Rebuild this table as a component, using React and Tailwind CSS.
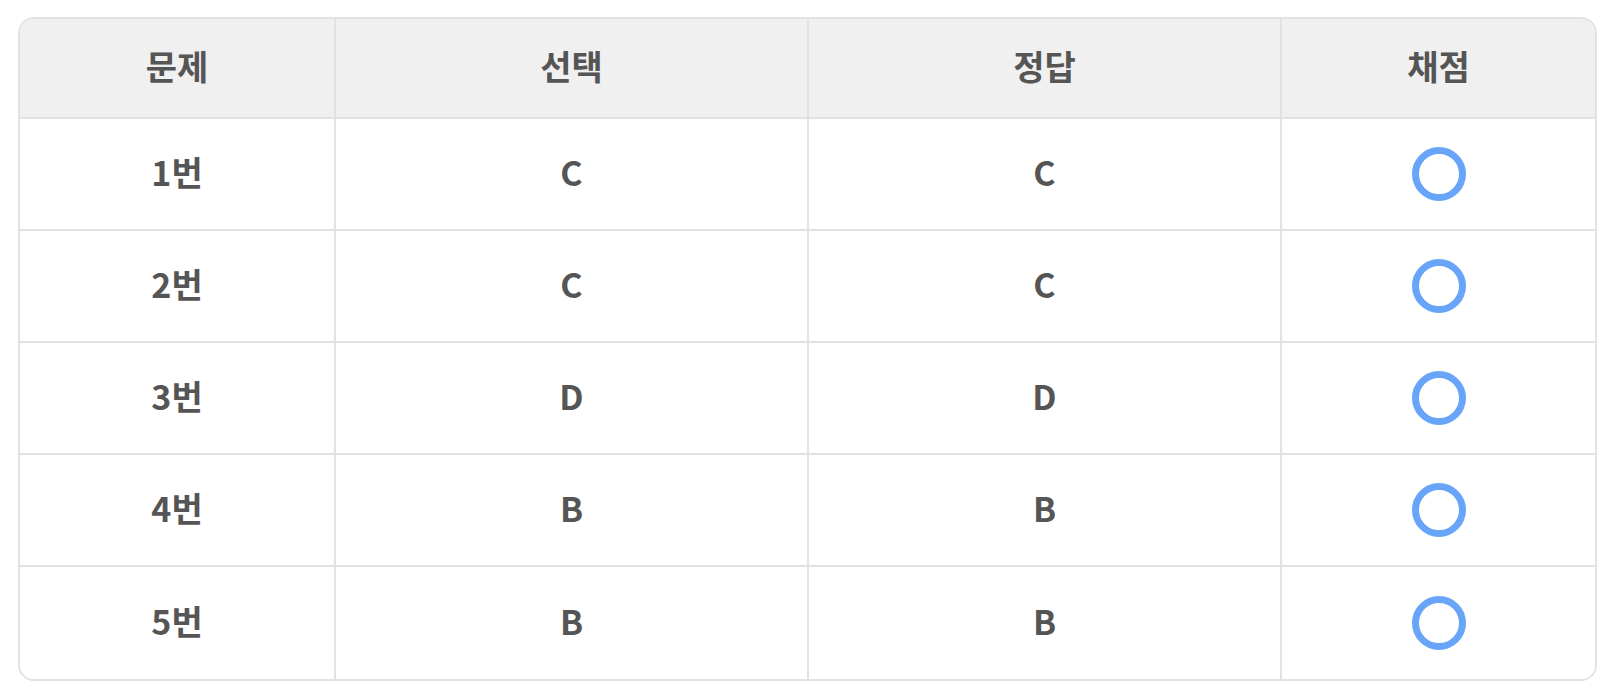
const rows = [
  { no: '1번', pick: 'C', answer: 'C' },
  { no: '2번', pick: 'C', answer: 'C' },
  { no: '3번', pick: 'D', answer: 'D' },
  { no: '4번', pick: 'B', answer: 'B' },
  { no: '5번', pick: 'B', answer: 'B' },
]

const headers = ['문제', '선택', '정답', '채점']

function Cell({ children, last, bottom, head, icon }) {
  return (
    <div
      className={`flex items-center justify-center ${icon ? '' : 'pb-[6px]'} ${head ? 'h-[100px] bg-[#f0f0f0]' : 'h-[112px] bg-white'} ${last ? '' : 'border-r-2'} ${bottom ? '' : 'border-b-2'} border-[#e2e2e2]`}
    >
      {children}
    </div>
  )
}

export default function App() {
  return (
    <div className="min-h-screen bg-white px-[18px] pt-[17px]" style={{ fontFamily: '"Noto Sans CJK KR", "Noto Sans", sans-serif' }}>
      <div className="grid grid-cols-[316px_473px_473px_1fr] border-2 border-[#e2e2e2] rounded-[16px] overflow-hidden text-[34px] font-bold text-[#555555]">
        {headers.map((h, i) => (
          <Cell key={h} head last={i === 3}>{h}</Cell>
        ))}
        {rows.map((r, ri) => {
          const bottom = ri === rows.length - 1
          return [
            <Cell key={r.no + 'a'} bottom={bottom}>{r.no}</Cell>,
            <Cell key={r.no + 'b'} bottom={bottom}>{r.pick}</Cell>,
            <Cell key={r.no + 'c'} bottom={bottom}>{r.answer}</Cell>,
            <Cell key={r.no + 'd'} bottom={bottom} last icon>
              <div className="w-[54px] h-[54px] rounded-full border-[7px] border-[#68a4f8]" />
            </Cell>,
          ]
        })}
      </div>
    </div>
  )
}
